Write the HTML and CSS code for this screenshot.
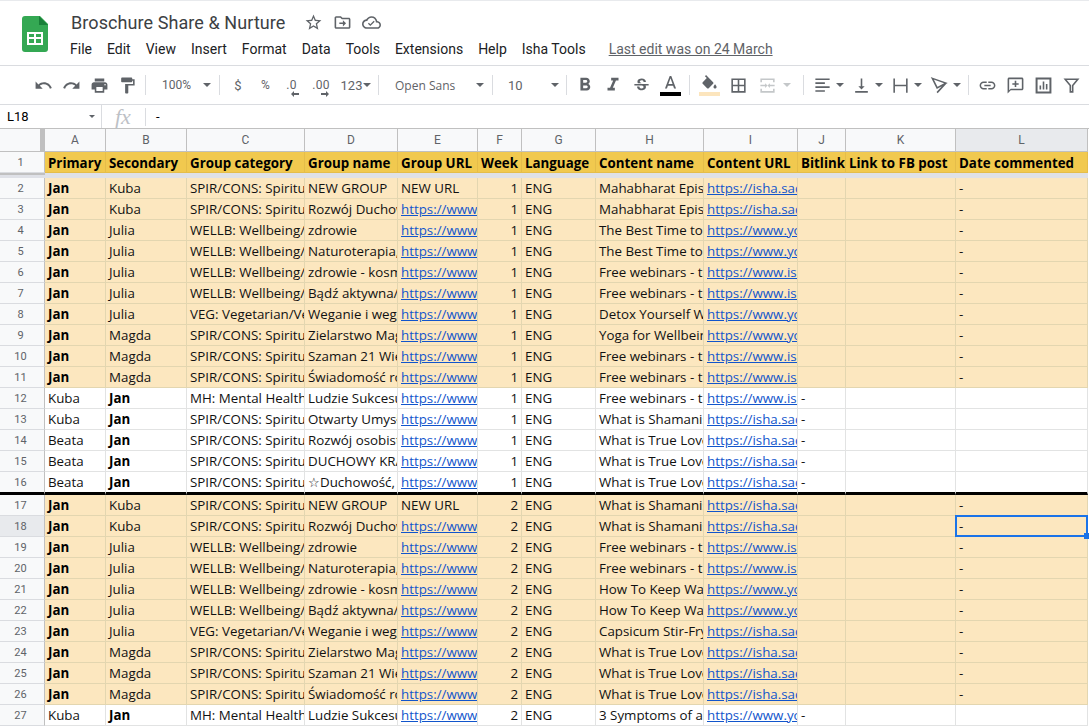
FILE: index.html
```html
<!DOCTYPE html>
<html lang="en">

<head>
    <meta charset="UTF-8">
    <title>Broschure Share &amp; Nurture</title>
    <link rel="stylesheet" href="styles.css">
</head>

<body>
    <header class="titlebar">
        <svg class="logo" viewBox="0 0 26 36" width="26" height="36">
            <path fill="#34a853" d="M3 0h15l8 8v25a3 3 0 0 1-3 3H3a3 3 0 0 1-3-3V3a3 3 0 0 1 3-3z"/>
            <path fill="#188038" d="M17 0l9 9h-9z"/>
            <path fill="#fff" d="M5 16h16v13H5zm2 2v3h5v-3zm7 0v3h5v-3zM7 23v4h5v-4zm7 0v4h5v-4z" fill-rule="evenodd"/>
        </svg>
        <div class="titletext">
            <div class="docname">
                <span class="docname-text">Broschure Share &amp; Nurture</span>
                <svg class="ico star" viewBox="0 0 24 24"><path d="M22 9.24l-7.19-.62L12 2 9.19 8.63 2 9.24l5.46 4.73L5.82 21 12 17.27 18.18 21l-1.63-7.03L22 9.24zM12 15.4l-3.76 2.27 1-4.28-3.32-2.88 4.38-.38L12 6.1l1.71 4.04 4.38.38-3.32 2.88 1 4.28L12 15.4z"/></svg>
                <svg class="ico star" viewBox="0 0 24 24"><path d="M20 6h-8l-2-2H4c-1.1 0-2 .9-2 2v12c0 1.1.9 2 2 2h16c1.1 0 2-.9 2-2V8c0-1.1-.9-2-2-2zm0 12H4V6h5.2l2 2H20v10z"/><path d="M12.5 9l4 4-4 4v-3H8v-2h4.500z"/></svg>
                <svg class="ico star" viewBox="0 0 24 24"><path d="M19.35 10.04C18.67 6.59 15.64 4 12 4 9.11 4 6.6 5.64 5.35 8.04 2.34 8.36 0 10.91 0 14c0 3.31 2.69 6 6 6h13c2.76 0 5-2.24 5-5 0-2.64-2.05-4.78-4.65-4.96zM19 18H6c-2.21 0-4-1.79-4-4s1.790-4 4-4h.71C7.37 7.69 9.48 6 12 6c3.040 0 5.5 2.46 5.5 5.5v.5H19c1.66 0 3 1.34 3 3s-1.34 3-3 3z"/><path d="M10.500 16.500l-3-3 1.200-1.200 1.800 1.800 4.300-4.300 1.200 1.200z"/></svg>
            </div>
            <nav class="menubar">
                <span class="menu">File</span>
                <span class="menu">Edit</span>
                <span class="menu">View</span>
                <span class="menu">Insert</span>
                <span class="menu">Format</span>
                <span class="menu">Data</span>
                <span class="menu">Tools</span>
                <span class="menu">Extensions</span>
                <span class="menu">Help</span>
                <span class="menu">Isha Tools</span>
                <a class="lastedit">Last edit was on 24 March</a>
            </nav>
        </div>
    </header>

    <div class="toolbar">
        <span class="tb"><svg class="ico" viewBox="0 0 24 24"><path d="M12.5 8c-2.65 0-5.05.99-6.9 2.6L2 7v9h9l-3.62-3.62c1.39-1.16 3.16-1.88 5.12-1.88 3.54 0 6.55 2.31 7.6 5.5l2.37-.78C21.08 11.03 17.15 8 12.5 8z"/></svg></span>
        <span class="tb"><svg class="ico" viewBox="0 0 24 24"><path d="M18.4 10.6C16.55 8.99 14.15 8 11.5 8c-4.65 0-8.58 3.03-9.96 7.22L3.9 16c1.05-3.19 4.05-5.5 7.6-5.5 1.95 0 3.73.72 5.12 1.88L13 16h9V7l-3.6 3.6z"/></svg></span>
        <span class="tb"><svg class="ico" viewBox="0 0 24 24"><path d="M19 8H5c-1.66 0-3 1.34-3 3v6h4v4h12v-4h4v-6c0-1.66-1.34-3-3-3zm-3 11H8v-5h8v5zm3-7c-.55 0-1-.45-1-1s.45-1 1-1 1 .45 1 1-.45 1-1 1zm-1-9H6v4h12V3z"/></svg></span>
        <span class="tb"><svg class="ico" viewBox="0 0 24 24"><path d="M18 4V3c0-.55-.45-1-1-1H5c-.55 0-1 .45-1 1v4c0 .55.45 1 1 1h12c.55 0 1-.45 1-1V6h1v4H9v11c0 .55.45 1 1 1h2c.55 0 1-.45 1-1v-9h8V4h-3z"/></svg></span>
        <span class="sep"></span>
        <span class="tb tb-zoom"><span class="tb-label">100%</span><i class="caret"></i></span>
        <span class="sep"></span>
        <span class="tb tb-txt">$</span>
        <span class="tb tb-pct">%</span>
        <span class="tb tb-dec1">.0<svg class="dec-arrow" viewBox="0 0 8 6" width="8" height="6"><path d="M0 3l3-3v2h5v2H3v2z"/></svg></span>
        <span class="tb tb-dec2">.00<svg class="dec-arrow" viewBox="0 0 8 6" width="8" height="6"><path d="M8 3L5 0v2H0v2h5v2z"/></svg></span>
        <span class="tb tb-num">123<i class="caret caret-near"></i></span>
        <span class="sep"></span>
        <span class="tb tb-font"><span class="tb-label tb-small">Open Sans</span><i class="caret"></i></span>
        <span class="sep"></span>
        <span class="tb tb-size"><span class="tb-label">10</span><i class="caret"></i></span>
        <span class="sep"></span>
        <span class="tb"><svg class="ico ico-lg" viewBox="0 0 24 24"><path d="M15.6 10.79c.97-.67 1.65-1.77 1.65-2.79 0-2.26-1.75-4-4-4H7v14h7.04c2.09 0 3.71-1.7 3.71-3.79 0-1.52-.86-2.82-2.15-3.42zM10 6.5h3c.83 0 1.5.67 1.5 1.5s-.67 1.5-1.5 1.5h-3v-3zm3.5 9H10v-3h3.5c.83 0 1.5.67 1.5 1.5s-.67 1.5-1.5 1.500z"/></svg></span>
        <span class="tb"><svg class="ico ico-lg" viewBox="0 0 24 24"><path d="M10 4v3h2.210l-3.420 8H6v3h8v-3h-2.210l3.420-8H18V4z"/></svg></span>
        <span class="tb"><svg class="ico" viewBox="0 0 24 24"><path d="M6.850 7.080C6.850 4.370 9.450 3 12.240 3c1.640 0 3 .49 3.900 1.280.77.65 1.460 1.730 1.460 3.240h-3.010c0-.31-.05-.59-.15-.85-.29-.86-1.200-1.280-2.250-1.280-1.860 0-2.340 1.020-2.340 1.700 0 .48.25.88.74 1.210.38.25.77.48 1.410.7H7.390c-.21-.34-.54-.89-.54-1.920zM21 12v-2H3v2h9.620c1.150.45 1.960.75 1.960 1.970 0 1-.81 1.670-2.280 1.670-1.540 0-2.930-.54-2.930-2.510H6.400c0 .55.08 1.130.24 1.580.81 2.290 3.290 3.300 5.670 3.300 2.270 0 5.300-.89 5.300-4.050 0-.3-.01-1.160-.48-1.960H21z"/></svg></span>
        <span class="tb tb-color">
            <svg class="ico-sm" viewBox="0 0 24 20"><path d="M11 1L5 17h2.500l1.200-3.500h6.600L16.500 17H19L13 1h-2zm-1.600 10.300L12 4l2.600 7.300H9.400z"/></svg>
            <i class="colorbar colorbar-black"></i>
        </span>
        <span class="sep"></span>
        <span class="tb tb-color tb-fill">
            <svg class="ico-sm" viewBox="0 0 24 20"><path d="M16.560 8.940L7.620 0 6.210 1.410l2.380 2.380-5.150 5.150c-.59.59-.59 1.540 0 2.120l5.500 5.500c.29.29.68.44 1.060.44s.77-.15 1.060-.44l5.500-5.500c.59-.58.59-1.530 0-2.120z"/><path d="M19 11.500s-2 2.170-2 3.500c0 1.100.9 2 2 2s2-.9 2-2c0-1.330-2-3.500-2-3.500z"/></svg>
            <i class="colorbar colorbar-peach"></i>
        </span>
        <span class="tb"><svg class="ico" viewBox="0 0 24 24"><path d="M3 3v18h18V3H3zm8 16H5v-6h6v6zm0-8H5V5h6v6zm8 8h-6v-6h6v6zm0-8h-6V5h6v6z"/></svg></span>
        <span class="tb tb-merge">
            <svg class="ico off" viewBox="0 0 24 24"><path d="M3 3h18v5h-2V5H5v3H3zM3 16h2v3h14v-3h2v5H3zM3 11h6V9l3 3-3 3v-2H3zM21 11h-6V9l-3 3 3 3v-2h6z"/></svg>
            <i class="caret caret-off"></i>
        </span>
        <span class="sep"></span>
        <span class="tb tb-drop"><svg class="ico" viewBox="0 0 24 24"><path d="M3 3h18v2H3zM3 8h12v2H3zM3 13h18v2H3zM3 18h12v2H3z"/></svg><i class="caret"></i></span>
        <span class="tb tb-drop"><svg class="ico" viewBox="0 0 24 24"><path d="M16 13h-3V3h-2v10H8l4 4 4-4zM4 19v2h16v-2H4z"/></svg><i class="caret"></i></span>
        <span class="tb tb-drop"><svg class="ico" viewBox="0 0 24 24"><path d="M3 3h2v18H3zM19 3h2v18h-2zM5 11h14v2H5z"/></svg><i class="caret"></i></span>
        <span class="tb tb-drop"><svg class="ico" viewBox="0 0 24 24"><path fill="none" stroke="#5f6368" stroke-width="2" d="M3 3l17 6-11 6zM20 9L9 21"/></svg><i class="caret"></i></span>
        <span class="sep"></span>
        <span class="tb"><svg class="ico" viewBox="0 0 24 24"><path d="M3.900 12c0-1.710 1.390-3.100 3.100-3.100h4V7H7c-2.760 0-5 2.240-5 5s2.240 5 5 5h4v-1.900H7c-1.710 0-3.100-1.390-3.100-3.100zM8 13h8v-2H8v2zm9-6h-4v1.900h4c1.710 0 3.100 1.390 3.100 3.100s-1.390 3.100-3.100 3.100h-4V17h4c2.760 0 5-2.240 5-5s-2.240-5-5-5z"/></svg></span>
        <span class="tb"><svg class="ico" viewBox="0 0 24 24"><path d="M20 2H4c-1.100 0-2 .9-2 2v18l4-4h14c1.100 0 2-.9 2-2V4c0-1.100-.9-2-2-2zm0 14H6l-2 2V4h16v12z"/><path d="M11 6h2v3h3v2h-3v3h-2v-3H8V9h3z"/></svg></span>
        <span class="tb"><svg class="ico" viewBox="0 0 24 24"><path fill-rule="evenodd" d="M2 2h20v20H2zM4.500 4.500v15h15v-15z"/><path d="M7 12h2v5H7zM11 7h2v10h-2zM15 10h2v7h-2z"/></svg></span>
        <span class="tb"><svg class="ico" viewBox="0 0 24 24"><path fill="none" stroke="#5f6368" stroke-width="2" d="M4 4h16l-6.500 8v8h-3v-8z"/></svg></span>
    </div>

    <div class="formulabar">
        <div class="namebox"><span>L18</span><i class="caret caret-small"></i></div>
        <div class="fx"><span>fx</span></div>
        <div class="formula">-</div>
    </div>

    <div class="grid">
        <table class="sheet">
            <colgroup>
                <col class="c-rh"><col class="c-a"><col class="c-b"><col class="c-c"><col class="c-d"><col class="c-e"><col class="c-f"><col class="c-g"><col class="c-h"><col class="c-i"><col class="c-j"><col class="c-k"><col class="c-l">
            </colgroup>
            <tr class="colheads">
                <th class="corner"></th><th>A</th><th>B</th><th>C</th><th>D</th><th>E</th><th>F</th><th>G</th><th>H</th><th>I</th><th>J</th><th>K</th><th class="on">L</th>
            </tr>
            <tr class="titles">
                <th class="rh">1</th><td>Primary</td><td>Secondary</td><td>Group category</td><td>Group name</td><td>Group URL</td><td>Week</td><td>Language</td><td>Content name</td><td>Content URL</td><td>Bitlink</td><td>Link to FB post</td><td>Date commented</td>
            </tr>
            <tr class="freeze"><td class="freeze-rh"></td><td colspan="12"></td></tr>
            <tr class="pe"><th class="rh">2</th><td class="b">Jan</td><td>Kuba</td><td>SPIR/CONS: Spirituality</td><td>NEW GROUP</td><td>NEW URL</td><td class="n">1</td><td>ENG</td><td>Mahabharat Episode</td><td><a>https://isha.sadhguru.org</a></td><td></td><td></td><td>-</td></tr>
            <tr class="pe"><th class="rh">3</th><td class="b">Jan</td><td>Kuba</td><td>SPIR/CONS: Spirituality</td><td>Rozwój Duchowy</td><td><a>https://www.facebook.com</a></td><td class="n">1</td><td>ENG</td><td>Mahabharat Episode</td><td><a>https://isha.sadhguru.org</a></td><td></td><td></td><td>-</td></tr>
            <tr class="pe"><th class="rh">4</th><td class="b">Jan</td><td>Julia</td><td>WELLB: Wellbeing/Health</td><td>zdrowie</td><td><a>https://www.facebook.com</a></td><td class="n">1</td><td>ENG</td><td>The Best Time to Eat</td><td><a>https://www.youtube.com</a></td><td></td><td></td><td>-</td></tr>
            <tr class="pe"><th class="rh">5</th><td class="b">Jan</td><td>Julia</td><td>WELLB: Wellbeing/Health</td><td>Naturoterapia, zdrowie</td><td><a>https://www.facebook.com</a></td><td class="n">1</td><td>ENG</td><td>The Best Time to Eat</td><td><a>https://www.youtube.com</a></td><td></td><td></td><td>-</td></tr>
            <tr class="pe"><th class="rh">6</th><td class="b">Jan</td><td>Julia</td><td>WELLB: Wellbeing/Health</td><td>zdrowie - kosmetyki</td><td><a>https://www.facebook.com</a></td><td class="n">1</td><td>ENG</td><td>Free webinars - the</td><td><a>https://www.ishafoundation.org</a></td><td></td><td></td><td>-</td></tr>
            <tr class="pe"><th class="rh">7</th><td class="b">Jan</td><td>Julia</td><td>WELLB: Wellbeing/Health</td><td>Bądź aktywna/y</td><td><a>https://www.facebook.com</a></td><td class="n">1</td><td>ENG</td><td>Free webinars - the</td><td><a>https://www.ishafoundation.org</a></td><td></td><td></td><td>-</td></tr>
            <tr class="pe"><th class="rh">8</th><td class="b">Jan</td><td>Julia</td><td>VEG: Vegetarian/Vegan</td><td>Weganie i weganki</td><td><a>https://www.facebook.com</a></td><td class="n">1</td><td>ENG</td><td>Detox Yourself With</td><td><a>https://www.youtube.com</a></td><td></td><td></td><td>-</td></tr>
            <tr class="pe"><th class="rh">9</th><td class="b">Jan</td><td>Magda</td><td>SPIR/CONS: Spirituality</td><td>Zielarstwo Magia</td><td><a>https://www.facebook.com</a></td><td class="n">1</td><td>ENG</td><td>Yoga for Wellbeing</td><td><a>https://www.youtube.com</a></td><td></td><td></td><td>-</td></tr>
            <tr class="pe"><th class="rh">10</th><td class="b">Jan</td><td>Magda</td><td>SPIR/CONS: Spirituality</td><td>Szaman 21 Wieku</td><td><a>https://www.facebook.com</a></td><td class="n">1</td><td>ENG</td><td>Free webinars - the</td><td><a>https://www.ishafoundation.org</a></td><td></td><td></td><td>-</td></tr>
            <tr class="pe"><th class="rh">11</th><td class="b">Jan</td><td>Magda</td><td>SPIR/CONS: Spirituality</td><td>Świadomość rozwój</td><td><a>https://www.facebook.com</a></td><td class="n">1</td><td>ENG</td><td>Free webinars - the</td><td><a>https://www.ishafoundation.org</a></td><td></td><td></td><td>-</td></tr>
            <tr><th class="rh">12</th><td>Kuba</td><td class="b">Jan</td><td>MH: Mental Health</td><td>Ludzie Sukcesu</td><td><a>https://www.facebook.com</a></td><td class="n">1</td><td>ENG</td><td>Free webinars - the</td><td><a>https://www.ishafoundation.org</a></td><td>-</td><td></td><td></td></tr>
            <tr><th class="rh">13</th><td>Kuba</td><td class="b">Jan</td><td>SPIR/CONS: Spirituality</td><td>Otwarty Umysł</td><td><a>https://www.facebook.com</a></td><td class="n">1</td><td>ENG</td><td>What is Shamanism</td><td><a>https://isha.sadhguru.org</a></td><td>-</td><td></td><td></td></tr>
            <tr><th class="rh">14</th><td>Beata</td><td class="b">Jan</td><td>SPIR/CONS: Spirituality</td><td>Rozwój osobisty</td><td><a>https://www.facebook.com</a></td><td class="n">1</td><td>ENG</td><td>What is True Love</td><td><a>https://isha.sadhguru.org</a></td><td>-</td><td></td><td></td></tr>
            <tr><th class="rh">15</th><td>Beata</td><td class="b">Jan</td><td>SPIR/CONS: Spirituality</td><td>DUCHOWY KRAJ</td><td><a>https://www.facebook.com</a></td><td class="n">1</td><td>ENG</td><td>What is True Love</td><td><a>https://isha.sadhguru.org</a></td><td>-</td><td></td><td></td></tr>
            <tr class="lastweek"><th class="rh">16</th><td>Beata</td><td class="b">Jan</td><td>SPIR/CONS: Spirituality</td><td>☆Duchowość, rozwój</td><td><a>https://www.facebook.com</a></td><td class="n">1</td><td>ENG</td><td>What is True Love</td><td><a>https://isha.sadhguru.org</a></td><td>-</td><td></td><td></td></tr>
            <tr class="pe"><th class="rh">17</th><td class="b">Jan</td><td>Kuba</td><td>SPIR/CONS: Spirituality</td><td>NEW GROUP</td><td>NEW URL</td><td class="n">2</td><td>ENG</td><td>What is Shamanism</td><td><a>https://isha.sadhguru.org</a></td><td></td><td></td><td>-</td></tr>
            <tr class="pe"><th class="rh on">18</th><td class="b">Jan</td><td>Kuba</td><td>SPIR/CONS: Spirituality</td><td>Rozwój Duchowy</td><td><a>https://www.facebook.com</a></td><td class="n">2</td><td>ENG</td><td>What is Shamanism</td><td><a>https://isha.sadhguru.org</a></td><td></td><td></td><td class="sel">-<i class="cursor"></i><i class="handle"></i></td></tr>
            <tr class="pe"><th class="rh">19</th><td class="b">Jan</td><td>Julia</td><td>WELLB: Wellbeing/Health</td><td>zdrowie</td><td><a>https://www.facebook.com</a></td><td class="n">2</td><td>ENG</td><td>Free webinars - the</td><td><a>https://www.ishafoundation.org</a></td><td></td><td></td><td>-</td></tr>
            <tr class="pe"><th class="rh">20</th><td class="b">Jan</td><td>Julia</td><td>WELLB: Wellbeing/Health</td><td>Naturoterapia, zdrowie</td><td><a>https://www.facebook.com</a></td><td class="n">2</td><td>ENG</td><td>Free webinars - the</td><td><a>https://www.ishafoundation.org</a></td><td></td><td></td><td>-</td></tr>
            <tr class="pe"><th class="rh">21</th><td class="b">Jan</td><td>Julia</td><td>WELLB: Wellbeing/Health</td><td>zdrowie - kosmetyki</td><td><a>https://www.facebook.com</a></td><td class="n">2</td><td>ENG</td><td>How To Keep Warm</td><td><a>https://www.youtube.com</a></td><td></td><td></td><td>-</td></tr>
            <tr class="pe"><th class="rh">22</th><td class="b">Jan</td><td>Julia</td><td>WELLB: Wellbeing/Health</td><td>Bądź aktywna/y</td><td><a>https://www.facebook.com</a></td><td class="n">2</td><td>ENG</td><td>How To Keep Warm</td><td><a>https://www.youtube.com</a></td><td></td><td></td><td>-</td></tr>
            <tr class="pe"><th class="rh">23</th><td class="b">Jan</td><td>Julia</td><td>VEG: Vegetarian/Vegan</td><td>Weganie i weganki</td><td><a>https://www.facebook.com</a></td><td class="n">2</td><td>ENG</td><td>Capsicum Stir-Fry</td><td><a>https://isha.sadhguru.org</a></td><td></td><td></td><td>-</td></tr>
            <tr class="pe"><th class="rh">24</th><td class="b">Jan</td><td>Magda</td><td>SPIR/CONS: Spirituality</td><td>Zielarstwo Magia</td><td><a>https://www.facebook.com</a></td><td class="n">2</td><td>ENG</td><td>What is True Love</td><td><a>https://isha.sadhguru.org</a></td><td></td><td></td><td>-</td></tr>
            <tr class="pe"><th class="rh">25</th><td class="b">Jan</td><td>Magda</td><td>SPIR/CONS: Spirituality</td><td>Szaman 21 Wieku</td><td><a>https://www.facebook.com</a></td><td class="n">2</td><td>ENG</td><td>What is True Love</td><td><a>https://isha.sadhguru.org</a></td><td></td><td></td><td>-</td></tr>
            <tr class="pe"><th class="rh">26</th><td class="b">Jan</td><td>Magda</td><td>SPIR/CONS: Spirituality</td><td>Świadomość rozwój</td><td><a>https://www.facebook.com</a></td><td class="n">2</td><td>ENG</td><td>What is True Love</td><td><a>https://isha.sadhguru.org</a></td><td></td><td></td><td>-</td></tr>
            <tr><th class="rh">27</th><td>Kuba</td><td class="b">Jan</td><td>MH: Mental Health</td><td>Ludzie Sukcesu</td><td><a>https://www.facebook.com</a></td><td class="n">2</td><td>ENG</td><td>3 Symptoms of a</td><td><a>https://www.youtube.com</a></td><td>-</td><td></td><td></td></tr>
        </table>
    </div>
</body>
</html>
```

FILE: styles.css
```css
* {
    margin: 0;
    padding: 0;
    box-sizing: border-box;
}

html,
body {
    height: 100%;
    overflow: hidden;
}

body {
    display: flex;
    flex-direction: column;
    font-family: Roboto, "Liberation Sans", sans-serif;
    color: #3c4043;
    background: #fff;
}

/* top bar */
.titlebar {
    display: flex;
    height: 66px;
    flex: none;
    padding: 15px 0 0 22px;
    border-top: 1px solid #e8eaed;
    border-bottom: 1px solid #dadce0;
}

.logo {
    flex: none;
}

.titletext {
    margin-left: 22px;
    margin-top: -6px;
}

.docname {
    display: flex;
    align-items: center;
    height: 24px;
    padding-left: 1px;
    font-size: 18px;
}

.docname-text {
    width: 214px;
    margin-right: 19px;
    white-space: nowrap;
    letter-spacing: .08px;
    color: #3c4043;
}

.star {
    margin-right: 10px;
}

.menubar {
    display: flex;
    align-items: center;
    margin-top: 3px;
    font-size: 14px;
    height: 24px;
    white-space: nowrap;
}

.menu {
    margin-right: 15px;
    color: #202124;
}

.lastedit {
    margin-left: 8px;
    color: #5f6368;
    text-decoration: underline;
}

/* icon toolbar */
.toolbar {
    display: flex;
    align-items: center;
    flex: none;
    height: 39px;
    padding-left: 29px;
    border-bottom: 1px solid #dadce0;
    color: #5f6368;
    font-size: 13px;
}

.ico {
    display: block;
    width: 19px;
    height: 19px;
    flex: none;
    fill: #5f6368;
}

.ico-lg {
    width: 22px;
    height: 22px;
}

.ico-sm {
    display: block;
    width: 19px;
    height: 16px;
    fill: #5f6368;
}

.off {
    fill: #c4c7c9;
}

.tb {
    display: flex;
    align-items: center;
    justify-content: center;
    flex: none;
    width: 28px;
    height: 24px;
    position: relative;
    white-space: nowrap;
}

.sep {
    flex: none;
    width: 1px;
    height: 20px;
    margin: 0 4px;
    background: #dadce0;
}

.caret {
    display: block;
    flex: none;
    width: 0;
    height: 0;
    border-left: 4px solid transparent;
    border-right: 4px solid transparent;
    border-top: 4px solid #5f6368;
}

.caret-near {
    margin-left: 1px;
}

.caret-off {
    border-top-color: #c4c7c9;
}

.caret-small {
    border-left-width: 3px;
    border-right-width: 3px;
    border-top-width: 3px;
}

.tb-label {
    flex: 1;
}

.tb-small {
    font-family: "Open Sans", sans-serif;
    font-size: 12px;
}

.tb-zoom {
    width: 65px;
    padding: 0 4px 0 12px;
    font-size: 12px;
}

.tb-font {
    width: 105px;
    padding: 0 4px 0 12px;
}

.tb-size {
    width: 65px;
    padding: 0 3px 0 11px;
}

.tb-pct {
    width: 27px;
    font-size: 12px;
}

.tb-dec1 {
    width: 25px;
    font-size: 12px;
    letter-spacing: .3px;
}

.tb-dec2 {
    width: 34px;
    font-size: 12px;
    letter-spacing: .3px;
}

.dec-arrow {
    position: absolute;
    bottom: 0;
    right: 5px;
    fill: #5f6368;
}

.tb-dec2 .dec-arrow {
    right: 9px;
}

.tb-num {
    width: 36px;
    font-size: 13px;
}

.tb-color {
    flex-direction: column;
    width: 30px;
    gap: 1px;
}

.tb-fill {
    width: 30px;
}

.colorbar {
    display: block;
    width: 21px;
    height: 4px;
}

.colorbar-black {
    background: #000;
}

.colorbar-peach {
    background: #fce5bd;
}

.tb-merge {
    justify-content: flex-start;
    width: 47px;
    padding-left: 6px;
    gap: 6px;
}

.tb-drop {
    justify-content: flex-start;
    width: 39px;
    padding-left: 5px;
    gap: 4px;
}

/* formula bar */
.formulabar {
    display: flex;
    align-items: center;
    flex: none;
    height: 24px;
    border-bottom: 1px solid #c0c0c0;
    font-size: 13px;
    color: #000;
}

.namebox {
    display: flex;
    align-items: center;
    justify-content: space-between;
    width: 102px;
    height: 23px;
    padding: 0 6px 0 7px;
    border-right: 1px solid #dadce0;
}

.fx {
    width: 44px;
    height: 18px;
    display: flex;
    align-items: center;
    padding-left: 13px;
    border-right: 1px solid #dadce0;
    font-family: "Liberation Serif", serif;
    font-style: italic;
    font-size: 22px;
    color: #bdc1c6;
}

.formula {
    padding-left: 10px;
}

/* sheet */
.grid {
    flex: 1;
    overflow: hidden;
}

.sheet {
    width: 1088px;
    table-layout: fixed;
    border-collapse: separate;
    border-spacing: 0;
    font-family: "Open Sans", sans-serif;
    font-size: 13.33px;
    color: #111;
}

.c-rh { width: 45px; }
.c-a { width: 61px; }
.c-b { width: 81px; }
.c-c { width: 118px; }
.c-d { width: 93px; }
.c-e { width: 80px; }
.c-f { width: 44px; }
.c-g { width: 74px; }
.c-h { width: 108px; }
.c-i { width: 94px; }
.c-j { width: 48px; }
.c-k { width: 110px; }
.c-l { width: 132px; }

.sheet tr {
    height: 21px;
}

.sheet td {
    padding: 0 3px;
    border-right: 1px solid #e2e3e3;
    border-bottom: 1px solid #e2e3e3;
    white-space: nowrap;
    overflow: hidden;
    vertical-align: middle;
}

.sheet th {
    background: #f8f9fa;
    border-right: 1px solid #c0c0c0;
    border-bottom: 1px solid #c0c0c0;
    font-family: Roboto, "Liberation Sans", sans-serif;
    font-weight: 400;
    font-size: 12px;
    color: #5f6368;
    text-align: center;
}

.sheet .colheads {
    height: 23px;
}

.sheet .corner {
    position: relative;
    border-right: 4px solid #c0c0c0;
    box-shadow: inset -1px 0 0 #c0c0c0;
}

.sheet .rh {
    padding-right: 3px;
    border-right: 1px solid #c0c0c0;
    border-bottom: 1px solid #dadce0;
    font-size: 11px;
}

.sheet .on {
    background: #e8eaed;
}

.sheet .titles td {
    padding-top: 3px;
    line-height: 15px;
    background: #f1c94f;
    border-color: #e5bd4a;
    font-weight: 700;
    color: #000;
}

.sheet .freeze {
    height: 5px;
}

.sheet .freeze td {
    height: 5px;
    padding: 0;
    border: 0;
    background: #dfe1e7;
}

.sheet .freeze .freeze-rh {
    border-top: 2px solid #c0c0c0;
}

.sheet .pe td {
    background: #fce7bf;
    border-color: #e3d6b0;
}

.sheet .b {
    font-weight: 700;
    color: #000;
}

.sheet .n {
    text-align: right;
}

.sheet a {
    color: #1155cc;
    text-decoration: underline;
}

.sheet .lastweek {
    height: 23px;
}

.sheet .lastweek td,
.sheet .lastweek th {
    border-bottom: 3px solid #000;
}

.sheet .sel {
    position: relative;
    overflow: visible;
}

.cursor {
    position: absolute;
    top: -1px;
    left: -1px;
    right: -1px;
    bottom: -1px;
    border: 2px solid #1a73e8;
}

.handle {
    position: absolute;
    right: -2px;
    bottom: -3px;
    width: 5px;
    height: 6px;
    background: #1a73e8;
}
```
